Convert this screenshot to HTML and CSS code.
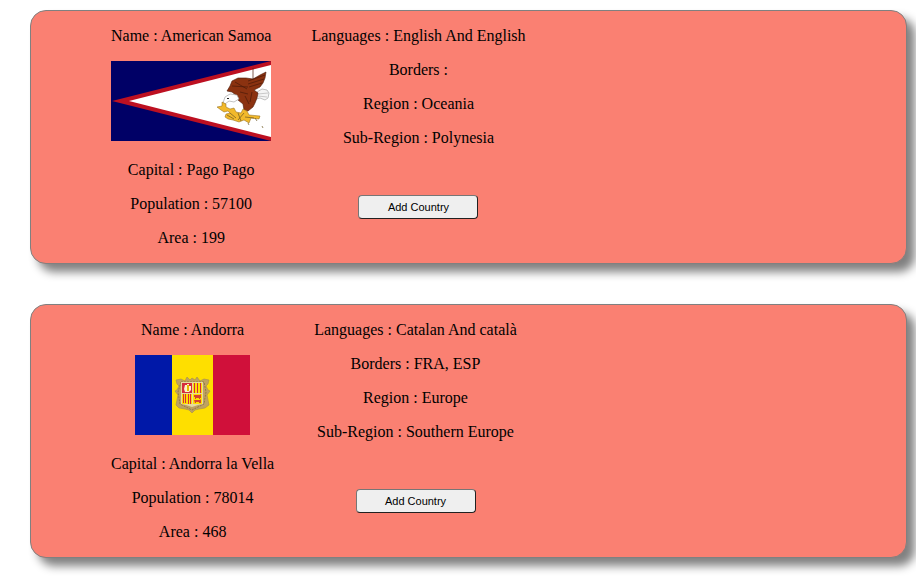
FILE: index.html
```html
<!DOCTYPE html>
<html lang="en">
<head>
<meta charset="utf-8">
<title>Countries</title>
<link rel="stylesheet" href="styles.css">
</head>
<body>
<main class="countries">
  <article class="card">
    <div class="column">
      <p>Name : American Samoa</p>
      <svg class="flag" width="160" height="80" viewBox="0 0 160 80" role="img" aria-label="Flag of American Samoa">
        <path fill="#006" d="M0 0h160v80H0z"/>
        <path fill="#bd1021" d="M1 40 160 0v80z"/>
        <path fill="#fff" d="M18 40 160 4v72z"/>
        <path fill="#f4f4f4" stroke="#999" stroke-width=".6" d="M146 31 151 28 156 29 158 32 157 37 154 39 149 37 145 38z"/>
        <path fill="none" stroke="#aaa" stroke-width=".6" d="M147 33 157 32M147 35 156 36"/>
        <path fill="#8b3210" stroke="#4a1a08" stroke-width=".6" d="M116 30 119 25 121 20 127 17 135 17 142 18 149 14 155 11 154 17 152 22 149 26 143 29 147 32 146 37 144 42 142 46 137 50 133 49 132 43 127 39 126 35 121 31z"/>
        <path fill="none" stroke="#4a1a08" stroke-width=".7" d="M137 20 154 14M137 23 153 18M138 26 151 22M121 25 137 26M124 21 136 28M129 31 137 33M134 35 138 43M141 31 139 41M142 7V18"/>
        <path fill="#fff" stroke="#999" stroke-width=".6" d="M112 42 114 36 119 33 126 34 128 38 123 41 118 40 114 43z"/>
        <path fill="#222" d="M116 37h2v1h-2z"/>
        <path fill="#f2b92b" stroke="#8b6414" stroke-width=".5" d="M106 46 111 45 111 41 115 43 115 46 119 48 123 47 125 51 130 52 132 48 136 50 138 54 149 55 148 58 140 57 138 62 133 59 128 61 122 59 117 58 114 56 115 53 119 52 117 50 113 51 110 49z"/>
        <path fill="none" stroke="#6c5722" stroke-width=".7" d="M116 54 123 58M119 52 125 57M127 52 130 60M133 52 127 59M134 56 143 57M137 62 138 64M144 57 146 60M151 65 152 67"/>
      </svg>
      <p>Capital : Pago Pago</p>
      <p>Population : 57100</p>
      <p>Area : 199</p>
    </div>
    <div class="column">
      <p>Languages : English And English</p>
      <p>Borders :</p>
      <p>Region : Oceania</p>
      <p>Sub-Region : Polynesia</p>
      <button class="add" type="button">Add Country</button>
    </div>
  </article>
  <article class="card">
    <div class="column">
      <p>Name : Andorra</p>
      <svg class="flag" width="115" height="80" viewBox="0 0 115 80" role="img" aria-label="Flag of Andorra">
        <path fill="#0018a8" d="M0 0h37v80H0z"/>
        <path fill="#fedf00" d="M37 0h41v80H37z"/>
        <path fill="#d0103a" d="M78 0h37v80H78z"/>
        <path fill="#bfa260" stroke="#a58d4e" stroke-width=".6" d="M57 23 60 25 62 22 65 26 69 24 74 25 73 29 71 31 73 35 75 36 72 40 73 45 74 50 70 53 64 54 60 55 57 58 54 55 50 54 44 53 41 50 42 45 43 40 40 36 42 35 44 31 42 29 41 25 46 24 50 26 52 22 55 25z"/>
        <path fill="none" stroke="#8f7848" stroke-width="1" stroke-dasharray="2 1" d="M46 27H69L71 37 69 49 63 52 57 55 51 52 45 49 43 37z"/>
        <path fill="#e5d9a0" d="M46 27h22v22l-5 1-6 2-6-2-5-1z"/>
        <path fill="#d52b3c" d="M47 28h10v10H47z"/>
        <path fill="#fff2c5" d="M50 30h2v-1h2v2h2v4l-2 2h-4l-1-3z"/>
        <path fill="#e7b900" d="M52 30h2v6h-2z"/>
        <path fill="#fedf00" d="M58 28h9v10h-9zM47 39h10v10H47zM58 39h9v10h-9z"/>
        <path fill="#d52b3c" d="M59 28h1v10h-1zM62 28h1v10h-1zM65 28h1v10h-1zM48 39h1v9h-1zM50 39h1v9h-1zM53 39h1v10h-1zM55 39h1v10h-1z"/>
        <path fill="#d5432c" d="M59 40h6l1-1v4h-1v1h-1v-1h-3v1h-1v-2h-1zM59 45h6l1-1v4h-2v-1h-3v1h-1z"/>
      </svg>
      <p>Capital : Andorra la Vella</p>
      <p>Population : 78014</p>
      <p>Area : 468</p>
    </div>
    <div class="column">
      <p>Languages : Catalan And català</p>
      <p>Borders : FRA, ESP</p>
      <p>Region : Europe</p>
      <p>Sub-Region : Southern Europe</p>
      <button class="add" type="button">Add Country</button>
    </div>
  </article>
</main>
</body>
</html>
```
FILE: styles.css
```css
body {
  margin: 0;
  background: #fff;
  color: #000;
  font: 16px/18px "Liberation Serif", "Times New Roman", serif;
}

.countries {
  display: flex;
  flex-direction: column;
  gap: 40px;
  padding: 10px 9px 29px 30px;
}

.card {
  display: flex;
  gap: 40px;
  padding: 16px 80px;
  border: 1px solid gray;
  border-radius: 16px;
  background: salmon;
  box-shadow: 8px 8px 10px gray;
}

.column {
  display: flex;
  flex-direction: column;
  align-items: center;
  gap: 16px;
}

.column p {
  margin: 0;
}

.flag {
  display: block;
  margin-bottom: 4px;
}

.add {
  width: 120px;
  height: 24px;
  margin-top: 32px;
  padding: 0;
  border: 1px solid;
  border-color: #767676 #212121 #212121 #767676;
  border-radius: 4px;
  background: #efefef;
  color: #000;
  font: 11px "Liberation Sans", Arial, sans-serif;
}
```
